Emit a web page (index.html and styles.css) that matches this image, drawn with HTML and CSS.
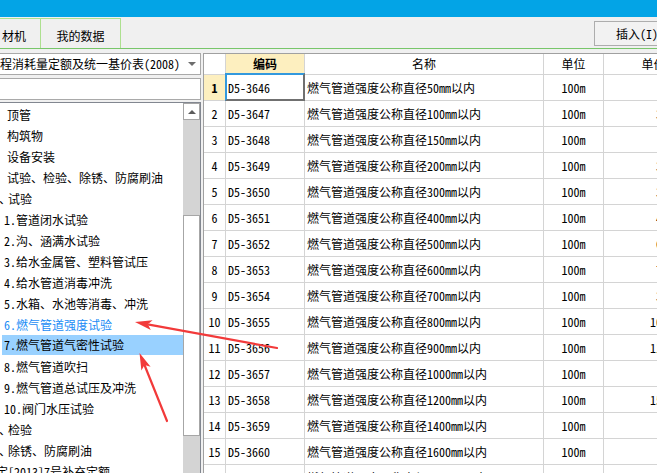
FILE: index.html
```html
<!DOCTYPE html>
<html lang="zh-CN">
<head>
<meta charset="utf-8">
<title>定额</title>
<link rel="stylesheet" href="styles.css">
</head>
<body>
<div class="app">
  <div class="titlebar"></div>
  <div class="tabbar">
    <div class="tab tab-first">材机</div>
    <div class="tab tab-second">我的数据</div>
    <button class="btn-insert">插入(I)</button>
  </div>
  <div class="main">
    <div class="left">
      <div class="combo"><span class="combo-text">程消耗量定额及统一基价表(2008)</span><span class="caret"></span></div>
      <div class="search"></div>
      <div class="tree">
        <ul class="tree-list">
          <li class="la">顶管</li>
          <li class="la">构筑物</li>
          <li class="la">设备安装</li>
          <li class="la">试验、检验、除锈、防腐刷油</li>
          <li class="lb"><span class="dun">、</span>试验</li>
          <li class="lc">1.管道闭水试验</li>
          <li class="lc">2.沟、涵满水试验</li>
          <li class="lc">3.给水金属管、塑料管试压</li>
          <li class="lc">4.给水管道消毒冲洗</li>
          <li class="lc">5.水箱、水池等消毒、冲洗</li>
          <li class="lc link">6.燃气管道强度试验</li>
          <li class="lc sel">7.燃气管道气密性试验</li>
          <li class="lc">8.燃气管道吹扫</li>
          <li class="lc">9.燃气管道总试压及冲洗</li>
          <li class="lc">10.阀门水压试验</li>
          <li class="lb"><span class="dun">、</span>检验</li>
          <li class="lb"><span class="dun">、</span>除锈、防腐刷油</li>
          <li class="lz">定[2013]7号补充定额</li>
        </ul>
        <div class="vscroll">
          <div class="sb-up"><span class="sb-arrow"></span></div>
          <div class="sb-track">
            <div class="sb-gap"></div>
            <div class="sb-thumb"></div>
          </div>
        </div>
      </div>
    </div>
    <div class="grid-panel">
      <div class="grid">
        <div class="hc"></div>
        <div class="hc hc-sel">编码</div>
        <div class="hc">名称</div>
        <div class="hc">单位</div>
        <div class="hc">单价</div>

        <div class="c num num-sel">1</div><div class="c code sel">D5-3646</div><div class="c name">燃气管道强度公称直径50mm以内</div><div class="c unit">100m</div><div class="c price">985.46</div>
        <div class="c num">2</div><div class="c code">D5-3647</div><div class="c name">燃气管道强度公称直径100mm以内</div><div class="c unit">100m</div><div class="c price">3218.45</div>
        <div class="c num">3</div><div class="c code">D5-3648</div><div class="c name">燃气管道强度公称直径150mm以内</div><div class="c unit">100m</div><div class="c price">996.27</div>
        <div class="c num">4</div><div class="c code">D5-3649</div><div class="c name">燃气管道强度公称直径200mm以内</div><div class="c unit">100m</div><div class="c price">3427.16</div>
        <div class="c num">5</div><div class="c code">D5-3650</div><div class="c name">燃气管道强度公称直径300mm以内</div><div class="c unit">100m</div><div class="c price">3562.88</div>
        <div class="c num">6</div><div class="c code">D5-3651</div><div class="c name">燃气管道强度公称直径400mm以内</div><div class="c unit">100m</div><div class="c price">4105.32</div>
        <div class="c num">7</div><div class="c code">D5-3652</div><div class="c name">燃气管道强度公称直径500mm以内</div><div class="c unit">100m</div><div class="c price">6231.07</div>
        <div class="c num">8</div><div class="c code">D5-3653</div><div class="c name">燃气管道强度公称直径600mm以内</div><div class="c unit">100m</div><div class="c price">7124.50</div>
        <div class="c num">9</div><div class="c code">D5-3654</div><div class="c name">燃气管道强度公称直径700mm以内</div><div class="c unit">100m</div><div class="c price">3851.26</div>
        <div class="c num">10</div><div class="c code">D5-3655</div><div class="c name">燃气管道强度公称直径800mm以内</div><div class="c unit">100m</div><div class="c price">10238.71</div>
        <div class="c num">11</div><div class="c code">D5-3656</div><div class="c name">燃气管道强度公称直径900mm以内</div><div class="c unit">100m</div><div class="c price">11402.63</div>
        <div class="c num">12</div><div class="c code">D5-3657</div><div class="c name">燃气管道强度公称直径1000mm以内</div><div class="c unit">100m</div><div class="c price">897.35</div>
        <div class="c num">13</div><div class="c code">D5-3658</div><div class="c name">燃气管道强度公称直径1200mm以内</div><div class="c unit">100m</div><div class="c price">15016.92</div>
        <div class="c num">14</div><div class="c code">D5-3659</div><div class="c name">燃气管道强度公称直径1400mm以内</div><div class="c unit">100m</div><div class="c price">963.18</div>
        <div class="c num">15</div><div class="c code">D5-3660</div><div class="c name">燃气管道强度公称直径1600mm以内</div><div class="c unit">100m</div><div class="c price">978.40</div>
        <div class="c num">16</div><div class="c code">D5-3661</div><div class="c name">燃气管道强度公称直径1800mm以内</div><div class="c unit">100m</div><div class="c price">991.12</div>
      </div>
    </div>
  </div>
  <svg class="annot" width="657" height="473" viewBox="0 0 657 473" aria-hidden="true">
    <line x1="277" y1="348" x2="149" y2="324.6" stroke="#f23a3a" stroke-width="2.2" stroke-linecap="round"/>
    <polygon points="135,322 152.6,320.2 147.8,324.3 150.8,330" fill="#f23a3a"/>
    <line x1="167" y1="421" x2="144.5" y2="365" stroke="#f23a3a" stroke-width="2.2" stroke-linecap="round"/>
    <polygon points="139.5,353 150.6,366.8 144.5,365 141.4,370.6" fill="#f23a3a"/>
  </svg>
</div>
</body>
</html>
```

FILE: styles.css
```css
* {
  box-sizing: border-box;
  margin: 0;
  padding: 0;
}

html, body {
  width: 657px;
  height: 473px;
  overflow: hidden;
}

body {
  background: #f0f0f0;
  font-family: "Noto Sans Mono CJK SC", "Noto Sans CJK SC", "Liberation Mono", monospace;
  font-size: 12px;
  color: #000;
}

.app {
  position: relative;
  width: 657px;
  height: 473px;
  overflow: hidden;
}

.titlebar {
  height: 17px;
  background: #03a4e6;
}

/* tab bar */
.tabbar {
  height: 32px;
  display: flex;
  align-items: flex-end;
  border-bottom: 1px solid #78c66a;
}

.tab {
  height: 30px;
  border-top: 1px solid #ade08f;
  border-right: 1px solid #ade08f;
  background: #f0f0f0;
  line-height: 30px;
  padding-top: 2px;
  font-size: 12px;
  white-space: nowrap;
}

.tab-first {
  width: 41px;
  padding-left: 2px;
}

.tab-second {
  width: 80px;
  text-align: center;
}

.btn-insert {
  align-self: flex-start;
  margin-top: 4px;
  margin-left: auto;
  margin-right: -23px;
  width: 86px;
  height: 25px;
  flex-shrink: 0;
  background: #f2f2f2;
  border: 1px solid #adadad;
  font: inherit;
  font-size: 12px;
  color: #000;
  text-align: center;
}

/* main */
.main {
  display: flex;
  gap: 2px;
  padding-top: 4px;
  height: 424px;
}

.left {
  width: 201px;
  flex-shrink: 0;
  display: flex;
  flex-direction: column;
}

.combo {
  height: 22px;
  margin-bottom: 3px;
  background: #fff;
  border: 1px solid #a9a9a9;
  border-left: none;
  display: flex;
  align-items: center;
  white-space: nowrap;
}

.combo-text {
  flex: 1;
  line-height: 20px;
}

.caret {
  width: 0;
  height: 0;
  margin-right: 4px;
  border-left: 4px solid transparent;
  border-right: 4px solid transparent;
  border-top: 4px solid #6d6d6d;
}

.search {
  height: 22px;
  margin-bottom: 2px;
  background: #fff;
  border: 1px solid #a9a9a9;
  border-left: none;
}

.tree {
  flex: 1;
  display: flex;
  background: #fff;
  border-top: 1px solid #828790;
  border-right: 1px solid #828790;
  overflow: hidden;
}

.tree-list {
  flex: 1;
  list-style: none;
  padding-top: 1px;
  overflow: hidden;
}

.tree-list li {
  height: 21px;
  line-height: 21px;
  white-space: nowrap;
}

.la { padding-left: 7px; }
.lc { padding-left: 4px; }
.lz { text-indent: -4px; }

.dun {
  margin-left: -1px;
  letter-spacing: -3px;
}

.tree-list .link { color: #1a8cf5; }

.tree-list .sel {
  height: 20px;
  margin-bottom: 1px;
  line-height: 20px;
  background: linear-gradient(to right, transparent 2px, #99d1ff 2px);
}

.vscroll {
  width: 17px;
  flex-shrink: 0;
  display: flex;
  flex-direction: column;
  background: #d4d4d4;
}

.sb-up {
  height: 17px;
  background: #fff;
  border: 1px solid #a6a6a6;
  display: flex;
  align-items: center;
  justify-content: center;
}

.sb-arrow {
  width: 0;
  height: 0;
  border-left: 4px solid transparent;
  border-right: 4px solid transparent;
  border-bottom: 4px solid #5c5c5c;
}

.sb-track {
  flex: 1;
  display: flex;
  flex-direction: column;
}

.sb-gap { height: 95px; }

.sb-thumb {
  height: 221px;
  background: #fff;
  border: 1px solid #a6a6a6;
}

/* grid */
.grid-panel {
  flex: 1;
  background: #fff;
  border-top: 1px solid #a0a0a0;
  border-left: 1px solid #a0a0a0;
  overflow: hidden;
}

.grid {
  display: grid;
  width: max-content;
  grid-template-columns: 22px 79px 239px 60px 100px;
  grid-template-rows: 21px;
  grid-auto-rows: 26px;
}

.hc, .c {
  border-right: 1px solid #d4d4d4;
  border-bottom: 1px solid #d4d4d4;
  white-space: nowrap;
  overflow: hidden;
}

.hc {
  line-height: 20px;
  text-align: center;
  background: #fff;
}

.hc-sel {
  background: #fdefbf;
  font-weight: bold;
}

.c {
  line-height: 25px;
}

.num { text-align: center; }

.num-sel {
  background: #fdefbf;
  font-weight: bold;
}

.code { padding-left: 2px; }
.name { padding-left: 2px; }
.unit { text-align: center; }

.price {
  text-align: right;
  padding-right: 5px;
}

.c.sel {
  position: relative;
  overflow: visible;
}

.c.sel::after {
  content: "";
  position: absolute;
  top: -2px;
  left: -1px;
  right: -1px;
  bottom: -1px;
  border-top: 2px solid #3399dd;
  border-left: 2px solid #3399dd;
  border-right: 2px solid #707070;
  border-bottom: 2px solid #707070;
}

/* annotation arrows */
.annot {
  position: absolute;
  top: 0;
  left: 0;
  pointer-events: none;
}
```
